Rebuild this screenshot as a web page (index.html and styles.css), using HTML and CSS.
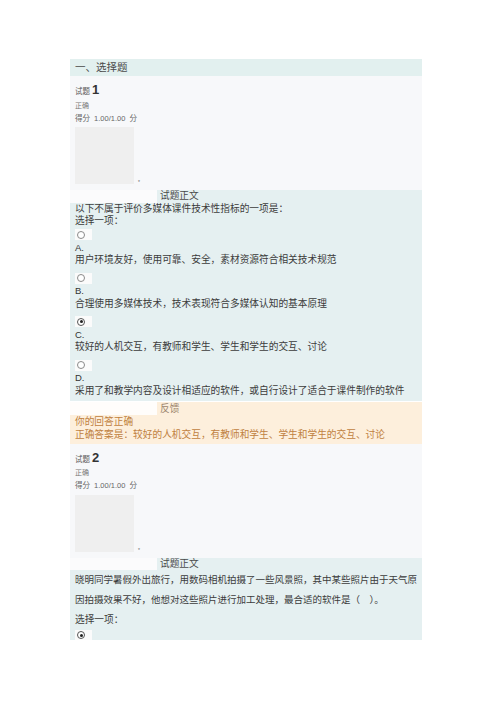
FILE: index.html
```html
<!DOCTYPE html>
<html lang="zh">
<head>
<meta charset="utf-8">
<title>选择题</title>
<link rel="stylesheet" href="styles.css">
</head>
<body>
<div class="page">
  <div class="section-title">一、选择题</div>

  <div class="que">
    <div class="info">
      <div class="qno">试题 <span class="num">1</span></div>
      <div class="state">正确</div>
      <div class="grade">得分 <span class="lat">1.00/1.00</span> 分</div>
      <div class="flag-row"><div class="thumb"></div><span class="flag">*</span></div>
    </div>
    <div class="formulation">
      <div class="legend-row"><span class="gap"></span><span class="legend">试题正文</span></div>
      <div class="qtext">以下不属于评价多媒体课件技术性指标的一项是：</div>
      <div class="prompt">选择一项：</div>
      <div class="answer">
        <div class="option">
          <div class="radio-row"><span class="radio-box"><span class="radio"></span></span></div>
          <div class="letter">A.</div>
          <div class="otext">用户环境友好，使用可靠、安全，素材资源符合相关技术规范</div>
        </div>
        <div class="option">
          <div class="radio-row"><span class="radio-box"><span class="radio"></span></span></div>
          <div class="letter">B.</div>
          <div class="otext">合理使用多媒体技术，技术表现符合多媒体认知的基本原理</div>
        </div>
        <div class="option">
          <div class="radio-row"><span class="radio-box"><span class="radio checked"></span></span></div>
          <div class="letter">C.</div>
          <div class="otext">较好的人机交互，有教师和学生、学生和学生的交互、讨论</div>
        </div>
        <div class="option">
          <div class="radio-row"><span class="radio-box"><span class="radio"></span></span></div>
          <div class="letter">D.</div>
          <div class="otext">采用了和教学内容及设计相适应的软件，或自行设计了适合于课件制作的软件</div>
        </div>
      </div>
    </div>
    <div class="feedback">
      <div class="legend-row"><span class="gap"></span><span class="legend fb-legend">反馈</span></div>
      <div class="fb-text">你的回答正确</div>
      <div class="fb-text">正确答案是：较好的人机交互，有教师和学生、学生和学生的交互、讨论</div>
    </div>
  </div>

  <div class="que">
    <div class="info">
      <div class="qno">试题 <span class="num">2</span></div>
      <div class="state">正确</div>
      <div class="grade">得分 <span class="lat">1.00/1.00</span> 分</div>
      <div class="flag-row"><div class="thumb"></div><span class="flag">*</span></div>
    </div>
    <div class="formulation last">
      <div class="legend-row"><span class="gap"></span><span class="legend">试题正文</span></div>
      <div class="qtext wide">晓明同学暑假外出旅行，用数码相机拍摄了一些风景照，其中某些照片由于天气原因拍摄效果不好，他想对这些照片进行加工处理，最合适的软件是（　）。</div>
      <div class="prompt wide">选择一项：</div>
      <div class="answer">
        <div class="radio-row short"><span class="radio-box"><span class="radio checked"></span></span></div>
      </div>
    </div>
  </div>
</div>
</body>
</html>
```

FILE: styles.css
```css
html, body {
  margin: 0;
  padding: 0;
  background: #ffffff;
}

body {
  font-family: "Liberation Sans", "Noto Sans CJK SC", sans-serif;
  color: #3a3a3a;
}

.page {
  width: 352px;
  margin: 59px 0 0 70px;
}

.section-title {
  height: 17px;
  line-height: 17px;
  padding-left: 5px;
  background: #e2f0ef;
  font-size: 10.5px;
  color: #4a4a4a;
}

.info {
  background: #f7f8fa;
  padding: 6px 5px 6px 5px;
}

.qno {
  height: 16px;
  line-height: 16px;
  font-size: 7.5px;
  color: #555;
}

.qno .num {
  font-size: 13px;
  font-weight: bold;
  color: #333;
}

.state {
  margin-top: 1.5px;
  height: 11px;
  line-height: 11px;
  font-size: 7px;
  color: #777;
}

.grade {
  margin-top: 2px;
  height: 11px;
  line-height: 11px;
  font-size: 7.5px;
  color: #666;
}

.grade .lat {
  font-size: 7.5px;
  margin: 0 2px;
}

.flag-row {
  margin-top: 3.5px;
  display: flex;
  align-items: flex-end;
  gap: 4px;
}

.thumb {
  width: 59px;
  height: 57px;
  background: #efefef;
}

.flag {
  font-size: 5px;
  line-height: 5px;
  color: #666;
  margin-bottom: -1px;
}

.formulation {
  background: #e5f0f1;
  padding: 0 1px 4px 0;
  font-size: 9.7px;
  line-height: 12.5px;
}

.legend-row {
  display: flex;
  height: 12.5px;
  line-height: 12.5px;
}

.legend-row .gap {
  width: 87px;
  flex: none;
  background: #fbfbfc;
}

.legend {
  padding-left: 3px;
  font-size: 9.7px;
  color: #4a4a4a;
}

.qtext,
.prompt,
.letter,
.otext,
.radio-row {
  padding-left: 5px;
}

.option {
  margin-bottom: 4.5px;
}

.option:last-child {
  margin-bottom: 0;
}

.radio-row {
  height: 14px;
  display: flex;
  align-items: center;
}

.radio-row.short {
  height: 10px;
  align-items: flex-start;
}

.radio-box {
  width: 17px;
  height: 11px;
  background: #fbfbfb;
  display: flex;
  align-items: center;
}

.radio-row.short .radio-box {
  height: 10px;
}

.radio {
  width: 6px;
  height: 6px;
  margin-left: 2px;
  border: 1px solid #8a8a8a;
  border-radius: 50%;
  background: #fff;
  position: relative;
}

.radio.checked {
  border-color: #555;
}

.radio.checked::after {
  content: "";
  position: absolute;
  left: 1.5px;
  top: 1.5px;
  width: 3px;
  height: 3px;
  border-radius: 50%;
  background: #222;
}

.letter {
  font-family: "Liberation Sans", sans-serif;
  font-size: 9.5px;
  line-height: 12.5px;
  color: #333;
}

.qtext,
.prompt,
.otext {
  color: #3c3c3c;
}

.qtext.wide {
  font-size: 9.5px;
  line-height: 20px;
}

.prompt.wide {
  line-height: 20px;
}

.formulation.last {
  padding-bottom: 0;
}

.feedback {
  background: #fdefdc;
  padding: 0 5px 3px 0;
  font-size: 9.7px;
  line-height: 13px;
}

.feedback .legend-row {
  height: 13px;
  line-height: 13px;
  margin-top: 0.5px;
}

.feedback .legend-row .gap {
  background: #fffdfb;
}

.fb-legend {
  color: #9a846c;
}

.fb-text {
  padding-left: 5px;
  color: #c0813f;
}
```
